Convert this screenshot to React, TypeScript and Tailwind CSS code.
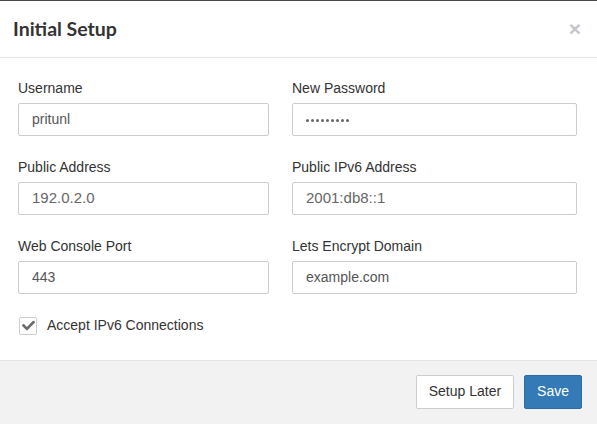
import { type ReactNode } from "react";

const sans = "font-['Liberation_Sans',Arial,sans-serif]";

function Field({
  label,
  value,
  muted,
  password,
}: {
  label: string;
  value: string;
  muted?: boolean;
  password?: boolean;
}) {
  return (
    <div className="flex flex-col">
      <label className="h-5 leading-5 text-[14px] text-[#333]">{label}</label>
      <div className="mt-[5px] h-[33px] border border-[#ccc] rounded-[2px] bg-white flex items-center px-[13px]">
        {password ? (
          <span className="flex gap-[2px] pt-[1px]">
            {value.split("").map((_, i) => (
              <span key={i} className="w-[3px] h-[3px] rounded-full bg-[#666]" />
            ))}
          </span>
        ) : (
          <span className={muted ? "text-[15px] text-[#666]" : "text-[14px] text-[#555]"}>
            {value}
          </span>
        )}
      </div>
    </div>
  );
}

function Row({ children }: { children: ReactNode }) {
  return <div className="grid grid-cols-[251px_285px] gap-x-[23px]">{children}</div>;
}

export default function App() {
  return (
    <div className={`w-[597px] h-[424px] bg-white border-t border-[#4a4a4a] flex flex-col ${sans}`}>
      <div className="h-[57px] border-b border-[#e5e5e5] flex items-center justify-between pl-[13px] pr-[16px]">
        <h4 className="font-['Lato',sans-serif] font-bold text-[19.5px] text-[#333] pb-[1px]">
          Initial Setup
        </h4>
        <button type="button" className="text-[21px] font-bold leading-none text-[#c6c6c6] pb-[2px]">
          ×
        </button>
      </div>

      <div className="flex-1 flex flex-col pt-[20px] pl-[18px] gap-[21px]">
        <Row>
          <Field label="Username" value="pritunl" />
          <Field label="New Password" value="•••••••••" password />
        </Row>
        <Row>
          <Field label="Public Address" value="192.0.2.0" muted />
          <Field label="Public IPv6 Address" value="2001:db8::1" muted />
        </Row>
        <Row>
          <Field label="Web Console Port" value="443" />
          <Field label="Lets Encrypt Domain" value="example.com" />
        </Row>
        <div className="flex items-center gap-[10px] pl-[1px]">
          <span className="w-[18px] h-[18px] border border-[#ccc] rounded-[2px] flex items-center justify-center">
            <svg viewBox="0 0 512 512" className="w-[13px] h-[13px]">
              <path
                d="M173.9 439.4l-166.4-166.4c-10-10-10-26.2 0-36.2l36.2-36.2c10-10 26.2-10 36.2 0L192 312.7 432.1 72.6c10-10 26.2-10 36.2 0l36.2 36.2c10 10 10 26.2 0 36.2l-294.4 294.4c-10 10-26.2 10-36.2 0z"
                fill="#6b6b6b"
              />
            </svg>
          </span>
          <span className="text-[14px] text-[#333]">Accept IPv6 Connections</span>
        </div>
      </div>

      <div className="h-[64px] bg-[#f2f2f2] border-t border-[#e5e5e5] flex items-center justify-end gap-[10px] pr-[15px] pb-[2px]">
        <button
          type="button"
          className="h-[34px] px-[12px] border border-[#ccc] rounded-[2px] bg-white text-[14px] text-[#333]"
        >
          Setup Later
        </button>
        <button
          type="button"
          className="h-[34px] px-[12px] border border-[#2e6da4] rounded-[2px] bg-[#337ab7] text-[14px] text-white"
        >
          Save
        </button>
      </div>
    </div>
  );
}
